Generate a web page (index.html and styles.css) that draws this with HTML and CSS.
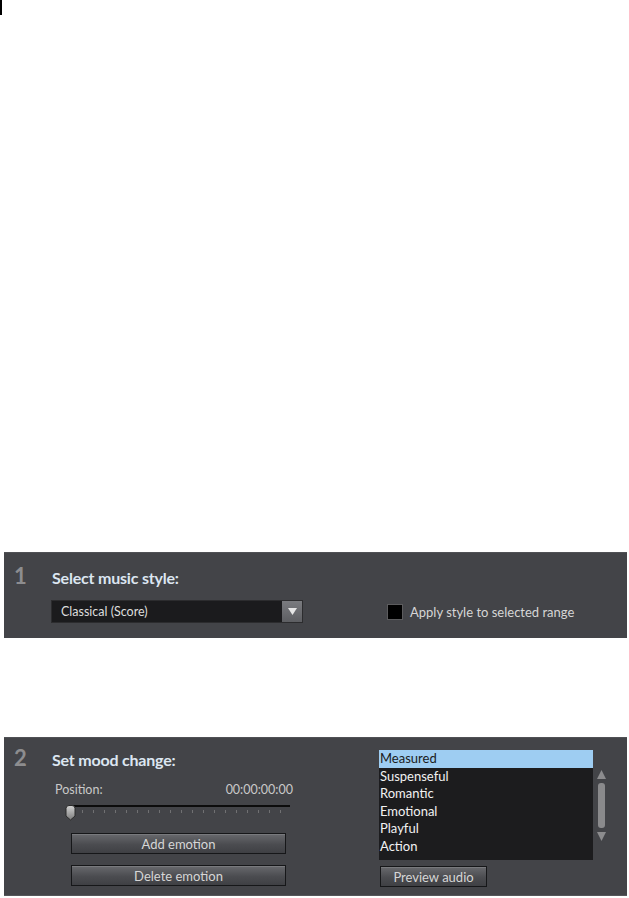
FILE: index.html
```html
<!DOCTYPE html>
<html lang="en">
<head>
  <meta charset="UTF-8" />
  <title>Music style</title>
  <link rel="stylesheet" href="styles.css">
</head>
<body>

  <!-- Cursor mark -->
  <div class="corner-mark"></div>

  <!-- Step 1 -->
  <section class="panel panel-style">
    <div class="panel-head">
      <span class="step-num">1</span>
      <h2 class="step-title">Select music style:</h2>
    </div>
    <div class="style-row">
      <div class="select-box">
        <span class="select-value">Classical (Score)</span>
        <span class="select-btn">
          <svg width="9" height="7" viewBox="0 0 9 7"><path d="M0 0H9L4.5 7Z" fill="#e6e6e6"/></svg>
        </span>
      </div>
      <label class="check">
        <span class="check-box"></span>
        <span class="check-text">Apply style to selected range</span>
      </label>
    </div>
  </section>

  <!-- Step 2 -->
  <section class="panel panel-mood">
    <div class="mood-left">
      <div class="panel-head">
        <span class="step-num">2</span>
        <h2 class="step-title">Set mood change:</h2>
      </div>
      <div class="pos-row">
        <span>Position:</span>
        <span>00:00:00:00</span>
      </div>
      <div class="slider">
        <div class="slider-track"></div>
        <div class="slider-ticks"></div>
        <svg class="slider-thumb" width="11" height="16" viewBox="0 0 11 16">
          <defs>
            <linearGradient id="thumbGrad" x1="0" y1="0" x2="0" y2="1">
              <stop offset="0" stop-color="#d2d2d2"/>
              <stop offset="1" stop-color="#7c7c7c"/>
            </linearGradient>
          </defs>
          <path d="M1 3.5Q1 0.5 4 0.5H7Q10 0.5 10 3.5V11L5.5 15L1 11Z" fill="url(#thumbGrad)" stroke="#2b2b2b"/>
        </svg>
      </div>
      <button class="btn btn-wide btn-add">Add emotion</button>
      <button class="btn btn-wide btn-delete">Delete emotion</button>
    </div>

    <div class="mood-right">
      <div class="list-wrap">
        <ul class="mood-list">
          <li class="selected">Measured</li>
          <li>Suspenseful</li>
          <li>Romantic</li>
          <li>Emotional</li>
          <li>Playful</li>
          <li>Action</li>
        </ul>
        <div class="scrollbar">
          <svg width="9" height="9" viewBox="0 0 9 9"><path d="M4.5 0L9 9H0Z" fill="#8c8c8e"/></svg>
          <span class="scroll-thumb"></span>
          <svg width="9" height="9" viewBox="0 0 9 9"><path d="M0 0H9L4.5 9Z" fill="#8c8c8e"/></svg>
        </div>
      </div>
      <button class="btn btn-preview">Preview audio</button>
    </div>
  </section>

</body>
</html>
```

FILE: styles.css
```css
body {
  margin: 0;
  background: #ffffff;
  font-family: Lato, "Open Sans", sans-serif;
}

.corner-mark {
  width: 2px;
  height: 15px;
  background: #000000;
}

.panel {
  margin-left: 4px;
  width: 623px;
  box-sizing: border-box;
  background: #434448;
  border-top: 1px solid #505155;
}

.panel-style {
  margin-top: 537px;
  height: 86px;
}

.panel-mood {
  margin-top: 99px;
  height: 159px;
  display: flex;
  border-bottom: 1px solid #55565a;
}

/* Step header */
.panel-head {
  display: flex;
  align-items: baseline;
  padding-top: 12px;
}

.panel-mood .panel-head {
  padding-top: 9px;
}

.step-num {
  width: 38px;
  margin-left: 10px;
  font-size: 22px;
  line-height: 22px;
  font-weight: 700;
  color: #8d8d8f;
}

.step-title {
  margin: 0;
  font-size: 16px;
  line-height: 18px;
  font-weight: 700;
  color: #dce6f1;
  letter-spacing: -0.2px;
}

/* Step 1 */
.style-row {
  display: flex;
  align-items: center;
  margin-top: 13px;
  padding-left: 47px;
}

.select-box {
  display: flex;
  width: 252px;
  height: 23px;
  box-sizing: border-box;
  background: #1b1b1d;
  border: 1px solid #2c2c2e;
}

.select-value {
  flex: 1;
  padding-left: 9px;
  font-size: 12.5px;
  line-height: 21px;
  color: #dedede;
}

.select-btn {
  width: 20px;
  display: flex;
  align-items: center;
  justify-content: center;
  background: linear-gradient(#7a7b7f, #5d5e62);
}

.check {
  display: flex;
  align-items: center;
  gap: 7px;
  margin-left: 84px;
}

.check-box {
  width: 16px;
  height: 16px;
  box-sizing: border-box;
  background: #000000;
  border: 1px solid #5c5c5e;
}

.check-text {
  font-size: 13px;
  color: #d6d6d6;
}

/* Step 2 */
.mood-left {
  width: 289px;
}

.pos-row {
  display: flex;
  justify-content: space-between;
  margin-top: 13px;
  padding-left: 51px;
  font-size: 12.5px;
  line-height: 15px;
  color: #c9c9c9;
}

.slider {
  position: relative;
  margin: 8px 0 0 61px;
  width: 225px;
  height: 16px;
}

.slider-track {
  margin: 6px 0 0 5px;
  height: 2px;
  background: #0c0c0c;
}

.slider-ticks {
  margin: 3px 0 0 17px;
  height: 3px;
  background: repeating-linear-gradient(to right, #707072 0 1px, transparent 1px 11px);
}

.slider-thumb {
  position: absolute;
  left: 0;
  top: 0;
}

.btn {
  display: block;
  height: 21px;
  padding: 0;
  box-sizing: border-box;
  font-family: Lato, "Open Sans", sans-serif;
  font-size: 13px;
  color: #d6d6d6;
  background: linear-gradient(#68696d, #4b4c50 55%, #3f4044);
  border: 1px solid #161719;
  box-shadow: inset 0 1px 0 rgba(255, 255, 255, 0.12);
}

.btn-wide {
  width: 215px;
  margin-left: 67px;
}

.btn-add {
  margin-top: 12px;
}

.btn-delete {
  margin-top: 11px;
}

.mood-right {
  margin-left: 86px;
  padding-top: 12px;
}

.list-wrap {
  display: flex;
}

.mood-list {
  width: 214px;
  height: 110px;
  margin: 0;
  padding: 0;
  list-style: none;
  background: #1c1c1e;
  font-size: 13px;
  line-height: 17.6px;
  color: #f2f2f2;
}

.mood-list li {
  padding-left: 1px;
}

.mood-list .selected {
  background: #9ecdf2;
  color: #1b1b1b;
}

.scrollbar {
  display: flex;
  flex-direction: column;
  width: 9px;
  margin-left: 4px;
  padding-top: 20px;
}

.scroll-thumb {
  width: 7px;
  height: 45px;
  margin: 4px 0 4px 1px;
  border-radius: 3px;
  background: #8a8a8c;
}

.btn-preview {
  width: 107px;
  margin: 6px 0 0 1px;
}
```
